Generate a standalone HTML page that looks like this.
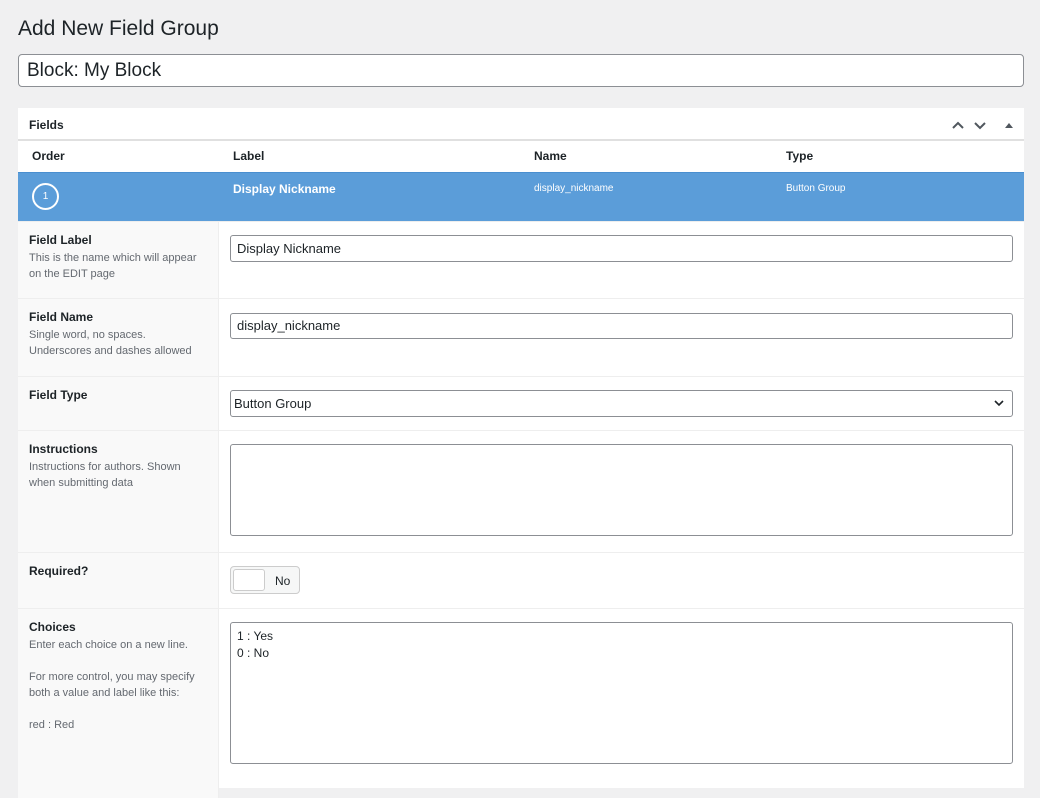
<!DOCTYPE html>
<html><head><style>
*{box-sizing:border-box;margin:0;padding:0}
body{width:1040px;height:780px;background:#f0f0f1;font-family:"Liberation Sans",sans-serif;color:#1d2327;position:relative;overflow:hidden}
.a{position:absolute}
h1{position:absolute;left:18px;top:17px;font-size:21px;font-weight:400;color:#1d2327}
.title{left:18px;top:54px;width:1006px;height:33px;background:#fff;border:1px solid #8c8f94;border-radius:4px;font-size:19px;padding:5px 8px}
.panel{left:18px;top:108px;width:1006px;height:680px;background:#fff}
.lbl{font-size:12px;font-weight:700;color:#1d2327}
.desc{font-size:11px;color:#646970;line-height:16px;margin-top:3px}
.inp{position:absolute;left:230px;width:783px;border:1px solid #8c8f94;border-radius:3px;background:#fff;font-size:13px;padding:0 6px}
.row{position:absolute;left:0;width:1006px;border-top:1px solid #eee}
.lc{position:absolute;left:0;top:0;width:201px;height:100%;background:#f9f9f9;border-right:1px solid #eee;padding:11px 11px}
</style></head><body>
<h1>Add New Field Group</h1>
<div class="a title">Block: My Block</div>
<div class="a panel">
 <div class="a" style="left:11px;top:10px;font-size:12px;font-weight:700">Fields</div>
 <svg class="a" style="left:933px;top:10px" width="80" height="14"><path d="M2 10l5-5 5 5M24 5l5 5 5-5" stroke="#50575e" stroke-width="2" fill="none"/><path d="M54 10l4-5 4 5z" fill="#50575e"/></svg>
 <div class="a" style="left:0;top:31px;width:1006px;height:2px;background:#e0e0e0"></div>
 <div class="a" style="top:41px;left:14px;font-size:12px;font-weight:700">Order</div>
 <div class="a" style="top:41px;left:215px;font-size:12px;font-weight:700">Label</div>
 <div class="a" style="top:41px;left:516px;font-size:12px;font-weight:700">Name</div>
 <div class="a" style="top:41px;left:768px;font-size:12px;font-weight:700">Type</div>
 <div class="a" style="top:64px;left:0;width:1006px;height:49px;background:#5b9dd9;border-top:1px solid #4a8fd0;color:#fff">
  <div class="a" style="left:14px;top:10px;width:27px;height:27px;border:2px solid #fff;border-radius:50%;font-size:10px;text-align:center;line-height:23px">1</div>
  <div class="a" style="left:215px;top:9px;font-size:12px;font-weight:700">Display Nickname</div>
  <div class="a" style="left:516px;top:10px;font-size:10px">display_nickname</div>
  <div class="a" style="left:768px;top:10px;font-size:10px">Button Group</div>
 </div>
 <div class="row" style="top:113px;height:77px"><div class="lc"><div class="lbl">Field Label</div><div class="desc">This is the name which will appear on the EDIT page</div></div></div>
 <div class="row" style="top:190px;height:78px"><div class="lc"><div class="lbl">Field Name</div><div class="desc">Single word, no spaces. Underscores and dashes allowed</div></div></div>
 <div class="row" style="top:268px;height:54px"><div class="lc"><div class="lbl">Field Type</div></div></div>
 <div class="row" style="top:322px;height:122px"><div class="lc"><div class="lbl">Instructions</div><div class="desc">Instructions for authors. Shown when submitting data</div></div></div>
 <div class="row" style="top:444px;height:56px"><div class="lc"><div class="lbl">Required?</div></div></div>
 <div class="row" style="top:500px;height:190px"><div class="lc"><div class="lbl">Choices</div><div class="desc">Enter each choice on a new line.<br><br>For more control, you may specify both a value and label like this:<br><br>red : Red</div></div></div>
</div>
<div class="inp" style="top:235px;height:27px;line-height:25px">Display Nickname</div>
<div class="inp" style="top:313px;height:26px;line-height:24px">display_nickname</div>
<div class="inp" style="top:390px;height:27px;line-height:25px;padding-left:3px">Button Group<svg class="a" style="right:8px;top:9px" width="10" height="7"><path d="M1 1l4 4 4-4" stroke="#1d2327" stroke-width="1.6" fill="none"/></svg></div>
<div class="inp" style="top:444px;height:92px"></div>
<div class="a" style="left:230px;top:566px;width:70px;height:28px;border:1px solid #ccc;border-radius:4px;background:#f6f7f7;font-size:12px"><div class="a" style="left:2px;top:2px;width:32px;height:22px;background:#fff;border:1px solid #ccc;border-radius:3px"></div><div class="a" style="left:44px;top:7px">No</div></div>
<div class="inp" style="top:622px;height:142px;padding-top:5px;line-height:17px;font-size:12px">1 : Yes<br>0 : No</div>
</body></html>
